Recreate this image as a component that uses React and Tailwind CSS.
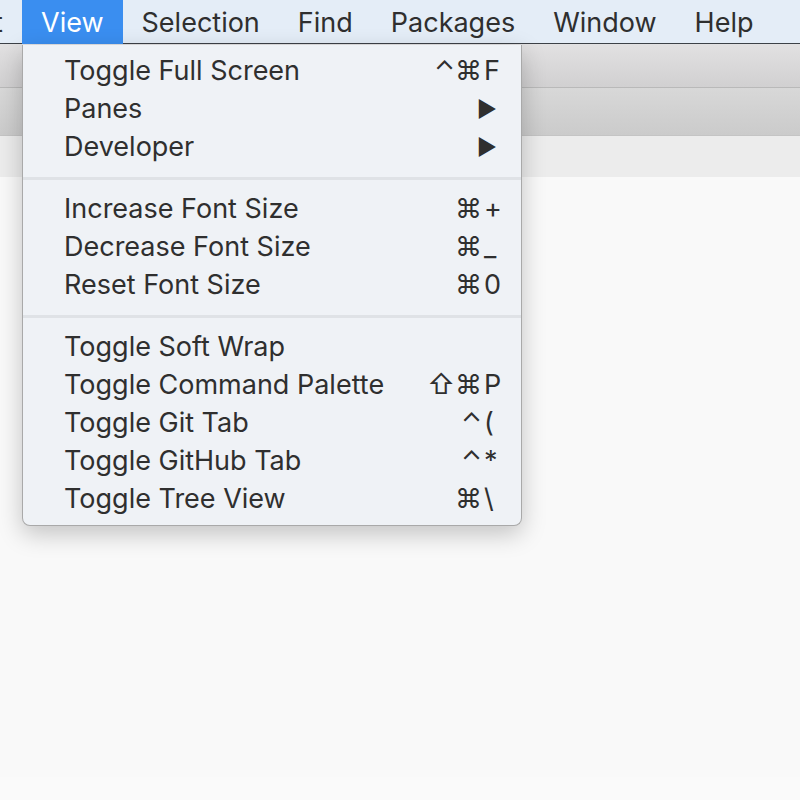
import React from "react";

const menuBar = ["View", "Selection", "Find", "Packages", "Window", "Help"];

const groups = [
  [
    { label: "Toggle Full Screen", mods: "⌃⌘", key: "F" },
    { label: "Panes", submenu: true },
    { label: "Developer", submenu: true },
  ],
  [
    { label: "Increase Font Size", mods: "⌘", key: "+" },
    { label: "Decrease Font Size", mods: "⌘", key: "_" },
    { label: "Reset Font Size", mods: "⌘", key: "0" },
  ],
  [
    { label: "Toggle Soft Wrap" },
    { label: "Toggle Command Palette", mods: "⇧⌘", key: "P" },
    { label: "Toggle Git Tab", mods: "⌃", key: "(" },
    { label: "Toggle GitHub Tab", mods: "⌃", key: "*" },
    { label: "Toggle Tree View", mods: "⌘", key: "\\" },
  ],
];

function MenuRow({ item }) {
  return (
    <div className="flex h-[38px] items-center pl-[41px] pr-[17px]">
      <span className="flex-1">{item.label}</span>
      {item.submenu && <span className="pr-[7px] text-[22px]">▶</span>}
      {item.key && (
        <span className="flex items-center gap-[2px]">
          <span className="text-right">{item.mods}</span>
          <span className="w-[20px] text-left">{item.key}</span>
        </span>
      )}
    </div>
  );
}

export default function App() {
  return (
    <div
      className="relative h-[800px] w-[800px] overflow-hidden bg-[#fafafa] text-[#2f2f2f]"
      style={{ fontFamily: "Inter, 'DejaVu Sans', sans-serif" }}
    >
      <div className="flex h-[44px] items-center border-b border-[#3c4147] bg-[#e4edf7] text-[27px]">
        <span className="flex h-[44px] w-[22px] items-center overflow-hidden pt-[3px]">
          <span className="-ml-[6px]">t</span>
        </span>
        {menuBar.map((name, i) => (
          <span
            key={name}
            className={
              i === 0
                ? "flex h-[44px] items-center bg-[#3a8ef0] px-[19px] pt-[3px] text-white"
                : "flex h-[44px] items-center px-[19px] pt-[3px]"
            }
          >
            {name}
          </span>
        ))}
      </div>

      <div className="h-[44px] border-b border-[#b9b9b9] bg-gradient-to-b from-[#e2e1e2] to-[#d1d0d1]" />
      <div className="h-[48px] border-b border-[#c4c4c4] bg-gradient-to-b from-[#d8d8d8] to-[#cbcbcb]" />
      <div className="h-[41px] bg-[#ececec]" />
      <div className="h-[600px] bg-[#f9f9f9]" />

      <div className="absolute left-[22px] top-[45px] w-[500px] rounded-b-[8px] border-x border-b border-[#a9a9a9] bg-[#eff2f6] pt-[7px] pb-[7px] text-[27px] shadow-[0_8px_24px_rgba(0,0,0,0.22)]">
        {groups.map((group, gi) => (
          <div key={gi}>
            {gi > 0 && <div className="mt-[11px] mb-[10px] h-[3px] bg-[#dfe2e6]" />}
            {group.map((item) => (
              <MenuRow key={item.label} item={item} />
            ))}
          </div>
        ))}
      </div>
    </div>
  );
}
